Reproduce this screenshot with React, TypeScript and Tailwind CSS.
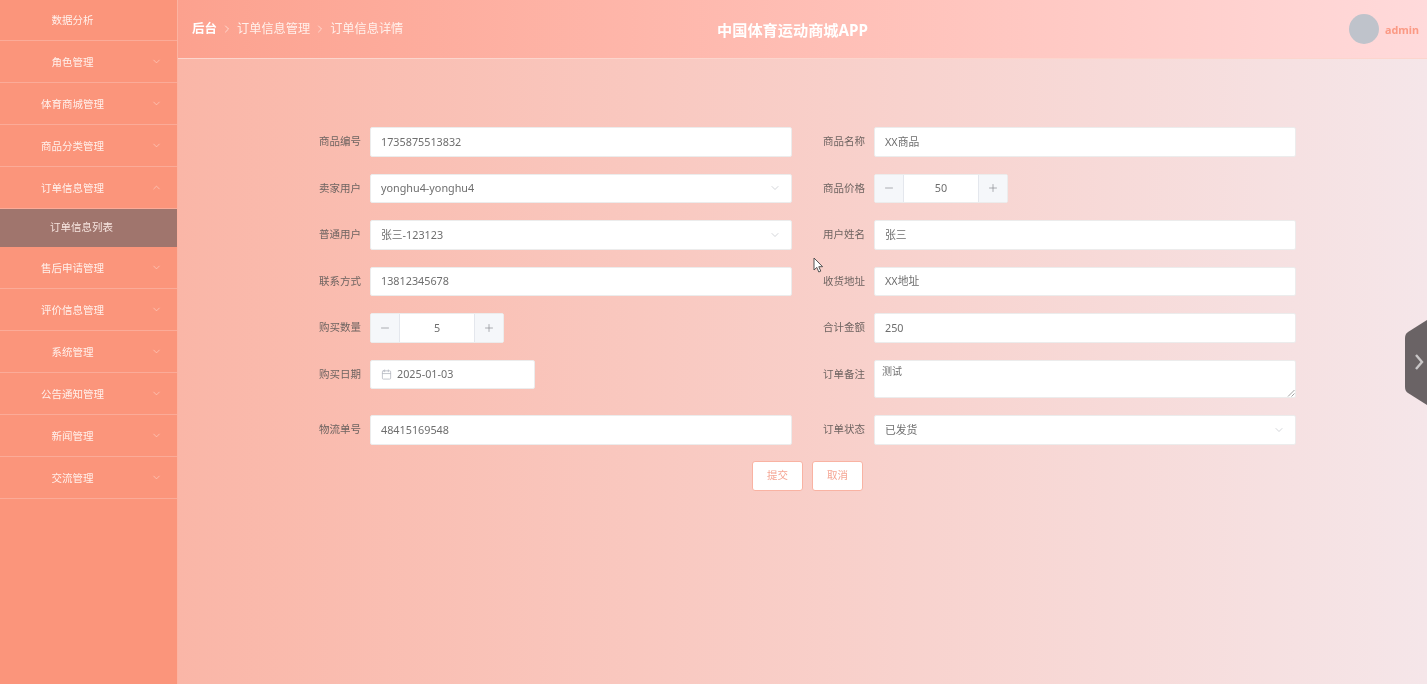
import { ChevronDown, ChevronRight, ChevronUp, Calendar, Minus, Plus } from 'lucide-react';

const topItems = [
  { label: '角色管理' },
  { label: '体育商城管理' },
  { label: '商品分类管理' },
];

const bottomItems = ['售后申请管理', '评价信息管理', '系统管理', '公告通知管理', '新闻管理', '交流管理'];

function MenuRow({ label, open }: { label: string; open?: boolean }) {
  const Icon = open ? ChevronUp : ChevronDown;
  return (
    <div className="relative flex h-[42px] items-center border-b border-[#fbab98] pr-[32px] pt-[2px] text-[#fff1ec]">
      <span className="w-full text-center text-[10.5px]">{label}</span>
      <Icon className="absolute right-[15px] top-[15px] h-[11px] w-[11px] text-[#fdcfc3]" strokeWidth={1.5} />
    </div>
  );
}

function Sidebar() {
  return (
    <aside className="flex h-full w-[178px] shrink-0 flex-col border-r border-[#fcb3a1] bg-[#fb957b]">
      <div className="flex h-[41px] items-center border-b border-[#fbab98] pr-[32px] pt-[2px] text-[#fff1ec]">
        <span className="w-full text-center text-[10.5px]">数据分析</span>
      </div>
      {topItems.map((item) => (
        <MenuRow key={item.label} label={item.label} />
      ))}
      <MenuRow label="订单信息管理" open />
      <div className="flex h-[38px] items-center justify-center bg-[#a0756d] pr-[14px] text-[10.5px] text-[#f6e4df]">
        <span>订单信息列表</span>
      </div>
      {bottomItems.map((label) => (
        <MenuRow key={label} label={label} />
      ))}
    </aside>
  );
}

function Header() {
  return (
    <header className="relative flex h-[59px] shrink-0 items-center justify-between border-b border-[#fcd5cd] bg-gradient-to-r from-[#fca18e] to-[#ffdadb] pl-[14px] pr-[8px]">
      <div className="flex items-center text-[12.2px] text-[#fff1ec]">
        <span className="text-[12.5px] font-bold text-white">后台</span>
        <ChevronRight className="mx-[4px] h-[12px] w-[12px] text-[#ffe9e4]" strokeWidth={1.5} />
        <span>订单信息管理</span>
        <ChevronRight className="mx-[4px] h-[12px] w-[12px] text-[#ffe9e4]" strokeWidth={1.5} />
        <span>订单信息详情</span>
      </div>
      <div className="absolute left-[539px] top-[19px] text-[15.2px] font-bold leading-[22px] text-white">中国体育运动商城APP</div>
      <div className="flex items-center gap-[6px]">
        <div className="h-[30px] w-[30px] rounded-full bg-[#bfc3cb]" />
        <span className="mt-[3px] text-[10.8px] font-bold text-[#fb9a85]">admin</span>
      </div>
    </header>
  );
}

function Field({ label, children }: { label: string; children: React.ReactNode }) {
  return (
    <div className="flex items-start">
      <label className="h-[29.5px] w-[73px] text-right text-[10.5px] leading-[29.5px] text-[#6e6461]">{label}</label>
      <div className="ml-[9px] w-[422px]">{children}</div>
    </div>
  );
}

function TextBox({ value }: { value: string }) {
  return (
    <div className="flex h-[29.5px] items-center rounded-[2px] border border-[#ececec] bg-white px-[10px] text-[10.8px] text-[#6e6e6e]">
      {value}
    </div>
  );
}

function SelectBox({ value }: { value: string }) {
  return (
    <div className="flex h-[29.5px] items-center justify-between rounded-[2px] border border-[#ececec] bg-white pl-[10px] pr-[10px] text-[10.8px] text-[#6e6e6e]">
      <span>{value}</span>
      <ChevronDown className="h-[12px] w-[12px] text-[#b8bbc2]" strokeWidth={1.25} />
    </div>
  );
}

function NumberBox({ value }: { value: string }) {
  return (
    <div className="flex h-[29.5px] w-[134px] items-stretch overflow-hidden rounded-[2px] border border-[#ececec] bg-white text-[10.8px] text-[#6e6e6e]">
      <div className="flex w-[29px] items-center justify-center border-r border-[#e4e7ed] bg-[#f5f7fa]">
        <Minus className="h-[12px] w-[12px] text-[#7d8087]" strokeWidth={1.25} />
      </div>
      <div className="flex flex-1 items-center justify-center">{value}</div>
      <div className="flex w-[29px] items-center justify-center border-l border-[#e4e7ed] bg-[#f5f7fa]">
        <Plus className="h-[12px] w-[12px] text-[#7d8087]" strokeWidth={1.25} />
      </div>
    </div>
  );
}

function DateBox({ value }: { value: string }) {
  return (
    <div className="flex h-[29.5px] w-[165px] items-center rounded-[2px] border border-[#ececec] bg-white pl-[10px] text-[10.8px] text-[#6e6e6e]">
      <Calendar className="mr-[5px] h-[11px] w-[11px] text-[#b4b8c0]" strokeWidth={1.75} />
      <span>{value}</span>
    </div>
  );
}

function OrderForm() {
  return (
    <div className="w-[1008px] pt-[68px]">
      <div className="grid grid-cols-2 gap-y-[17px]">
        <Field label="商品编号"><TextBox value="1735875513832" /></Field>
        <Field label="商品名称"><TextBox value="XX商品" /></Field>
        <Field label="卖家用户"><SelectBox value="yonghu4-yonghu4" /></Field>
        <Field label="商品价格"><NumberBox value="50" /></Field>
        <Field label="普通用户"><SelectBox value="张三-123123" /></Field>
        <Field label="用户姓名"><TextBox value="张三" /></Field>
        <Field label="联系方式"><TextBox value="13812345678" /></Field>
        <Field label="收货地址"><TextBox value="XX地址" /></Field>
        <Field label="购买数量"><NumberBox value="5" /></Field>
        <Field label="合计金额"><TextBox value="250" /></Field>
        <Field label="购买日期"><DateBox value="2025-01-03" /></Field>
        <Field label="订单备注">
          <div className="relative h-[38.5px] rounded-[2px] border border-[#ececec] bg-white px-[7px] py-[3px] text-[10px] leading-[14px] text-[#6e6e6e]">
            测试
            <svg className="absolute bottom-0 right-0 h-[8px] w-[8px]" viewBox="0 0 8 8" fill="none" stroke="#8a8a8a" strokeWidth="0.8">
              <path d="M1 7.5 7.5 1M4.5 7.5 7.5 4.5" />
            </svg>
          </div>
        </Field>
        <Field label="物流单号"><TextBox value="48415169548" /></Field>
        <Field label="订单状态"><SelectBox value="已发货" /></Field>
      </div>
      <div className="mt-[16px] flex justify-center gap-[9px] pl-[31px]">
        <button className="h-[30px] w-[51px] rounded-[3px] border border-[#f9b3a3] bg-white text-[10.5px] text-[#f5a593]">提交</button>
        <button className="h-[30px] w-[51px] rounded-[3px] border border-[#f9b3a3] bg-white text-[10.5px] text-[#f5a593]">取消</button>
      </div>
    </div>
  );
}

export default function App() {
  return (
    <div
      className="relative flex h-[684px] w-[1427px] overflow-hidden bg-[#fb957b] blur-[0.4px]"
      style={{ fontFamily: '"Noto Sans", "Noto Sans CJK SC", sans-serif' }}
    >
      <Sidebar />
      <main className="flex min-w-0 flex-1 flex-col">
        <Header />
        <div className="flex flex-1 bg-gradient-to-r from-[#fab6a7] to-[#f5e6e9] pl-[110px]">
          <OrderForm />
        </div>
      </main>

      {/* side handle */}
      <svg className="absolute right-0 top-[320px] h-[85px] w-[22px]" viewBox="0 0 22 85">
        <path d="M22 0 3 12Q0 14 0 18V67Q0 71 3 73L22 85Z" fill="#6a6365" />
        <path d="M11 35 17 42 11 49" fill="none" stroke="#c9c6c7" strokeWidth="2.4" />
      </svg>

      {/* mouse cursor */}
      <svg className="absolute left-[813px] top-[257px] h-[16px] w-[11px]" viewBox="0 0 11 16">
        <path d="M1 1V13L3.8 10.4 5.8 15 7.8 14.1 5.8 9.7H9.6Z" fill="#fff" stroke="#444" strokeWidth="0.9" />
      </svg>
    </div>
  );
}
